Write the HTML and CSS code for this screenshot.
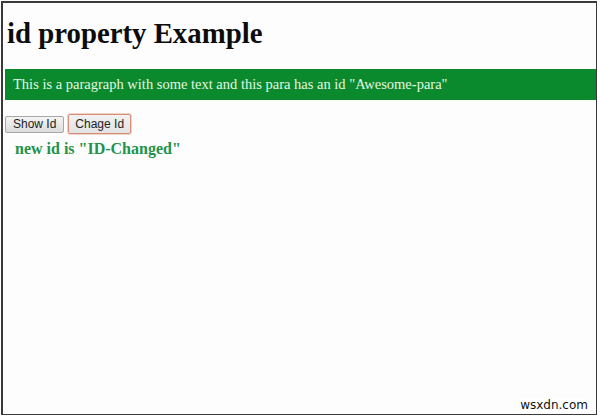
FILE: index.html
```html
<!DOCTYPE html>
<html>
<head>
<meta charset="utf-8">
<link rel="stylesheet" href="styles.css">
</head>
<body>
<div class="frame">
  <h1 class="title">id property Example</h1>
  <p class="para" id="Awesome-para">This is a paragraph with some text and this para has an id "Awesome-para"</p>
  <div class="buttons">
    <button class="btn">Show Id</button>
    <button class="btn btn-focus">Chage Id</button>
  </div>
  <div class="result">new id is "ID-Changed"</div>
  <div class="watermark">wsxdn.com</div>
</div>
</body>
</html>
```
FILE: styles.css
```css
html, body {
  margin: 0;
  padding: 0;
  background: #ffffff;
}
body {
  padding: 1px 0 0 1px;
  font-family: "Liberation Serif", "Times New Roman", serif;
}
.frame {
  position: relative;
  box-sizing: border-box;
  width: 596px;
  height: 414px;
  border: 2px solid #3a3a3a;
  border-right-width: 1px;
  border-bottom-width: 1px;
  padding: 0 0 0 2px;
  background: #fdfdfd;
}
.title {
  margin: 14px 0 0 2px;
  font-size: 28.8px;
  line-height: 33px;
  font-weight: bold;
  color: #0c0c0c;
}
.para {
  margin: 19px 0 0 0;
  height: 31px;
  box-sizing: border-box;
  padding: 0 0 0 8px;
  background: #0a8a2c;
  color: #e4f6e4;
  font-size: 14.5px;
  line-height: 31px;
}
.buttons {
  display: flex;
  gap: 4px;
  margin-top: 14px;
  align-items: center;
}
.btn {
  font-family: "Liberation Sans", Arial, sans-serif;
  font-size: 12px;
  color: #222;
  background: linear-gradient(#f4f4f4, #dcdcdc);
  border: 1px solid #a8a8a8;
  border-radius: 2px;
  height: 17px;
  padding: 0 7px;
  line-height: 15px;
}
.btn-focus {
  height: 20px;
  border: 1px solid #d98d78;
  box-shadow: 0 0 0 1px #f2d2c6;
  background: linear-gradient(#f2f2f2, #e2e2e2);
  padding: 0 6px;
}
.result {
  margin: 6px 0 0 10px;
  font-size: 16px;
  font-weight: bold;
  line-height: 18px;
  color: #23934a;
}
.watermark {
  position: absolute;
  right: 8px;
  bottom: 2px;
  font-family: "DejaVu Sans", sans-serif;
  font-size: 12px;
  color: #111;
  background: #fff;
}
```
